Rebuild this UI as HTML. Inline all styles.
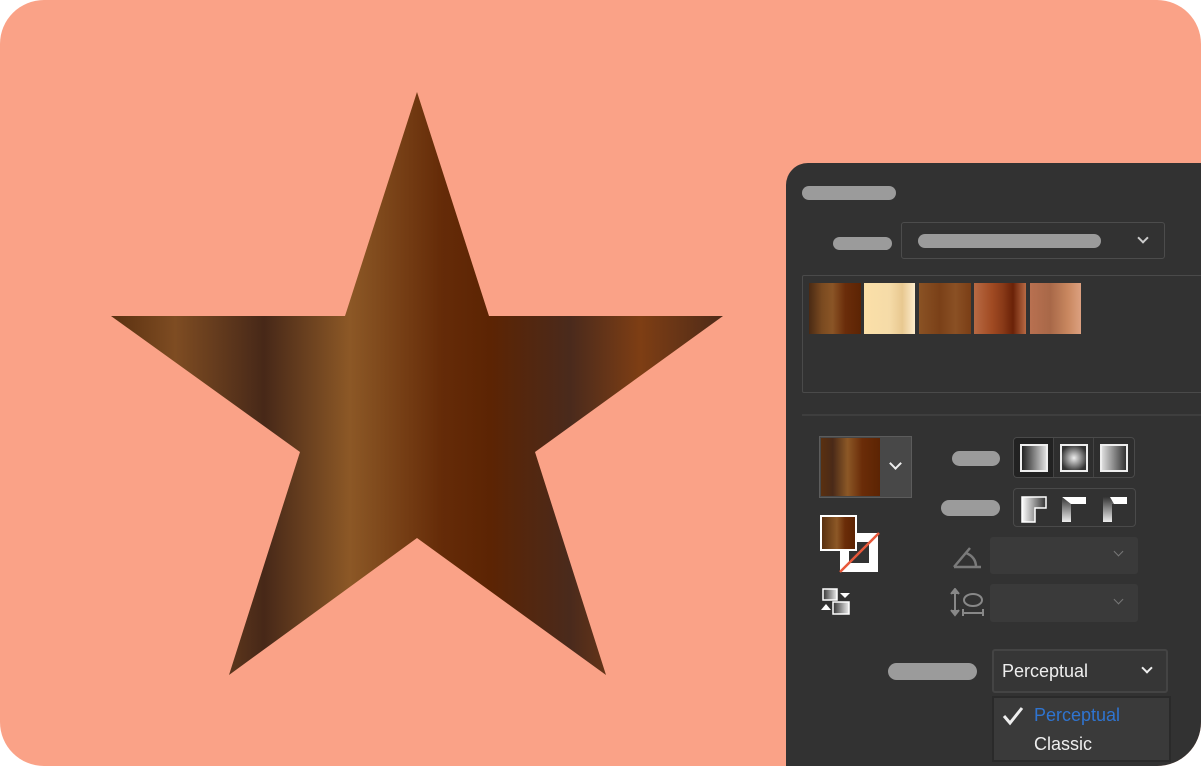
<!DOCTYPE html>
<html><head><style>
*{margin:0;padding:0;box-sizing:border-box}
html,body{width:1201px;height:766px;background:#fff;overflow:hidden}
#pg{position:absolute;left:0;top:0;width:1201px;height:766px;background:#FAA287;border-radius:44px;overflow:hidden}
.a{position:absolute}
.pill{position:absolute;background:#9b9b9b;border-radius:8px}
#panel{position:absolute;left:786px;top:163px;width:430px;height:620px;background:#323232;border-top-left-radius:22px}
.sw{position:absolute;top:283px;height:51px;width:52px}
.chev{position:absolute;width:8px;height:8px;border-right:2px solid #ccc;border-bottom:2px solid #ccc;transform:rotate(45deg)}
.btn{position:absolute;width:40px;height:40px;border-right:1px solid #444}
.gsq{position:absolute;left:6px;top:6px;width:28px;height:28px;border:2px solid #eee}
.dd{position:absolute;left:990px;width:148px;background:#3a3a3a;border-radius:3px}
</style></head><body>
<div id="pg">
<svg class="a" style="left:0;top:0" width="786" height="766">
<defs><linearGradient id="g" gradientUnits="userSpaceOnUse" x1="111" y1="0" x2="723" y2="0">
<stop offset="0" stop-color="#5a3010"/>
<stop offset="0.105" stop-color="#7e4c22"/>
<stop offset="0.25" stop-color="#472818"/>
<stop offset="0.39" stop-color="#8c5826"/>
<stop offset="0.54" stop-color="#652b08"/>
<stop offset="0.62" stop-color="#5c2403"/>
<stop offset="0.75" stop-color="#4a2a1c"/>
<stop offset="0.865" stop-color="#7e3e14"/>
<stop offset="1" stop-color="#4e2a18"/>
</linearGradient></defs>
<polygon points="417,92 489,316 723,316 535,452 606,675 417,538 229,675 300,452 111,316 345,316" fill="url(#g)"/>
</svg>
<div id="panel"></div>
<div class="pill" style="left:802px;top:186px;width:94px;height:14px"></div>
<div class="pill" style="left:833px;top:237px;width:59px;height:13px"></div>
<div class="a" style="left:901px;top:222px;width:264px;height:37px;border:1px solid #4c4c4c;border-radius:3px"></div>
<div class="pill" style="left:918px;top:234px;width:183px;height:14px"></div>
<div class="chev" style="left:1139px;top:234px"></div>
<div class="a" style="left:802px;top:275px;width:420px;height:118px;border:1px solid #4a4a4a;border-radius:2px"></div>
<div class="sw" style="left:809px;background:linear-gradient(90deg,#4a2a14,#7a4a20 25%,#8a5526 45%,#6a2c0a 70%,#5c2404)"></div>
<div class="sw" style="left:864px;width:51px;background:linear-gradient(90deg,#fbe0a8,#f5dba8 50%,#e8c890 75%,#fdeccc)"></div>
<div class="sw" style="left:919px;background:linear-gradient(90deg,#8a5224,#7a4018 40%,#8a5024 70%,#7a3e16)"></div>
<div class="sw" style="left:974px;background:linear-gradient(90deg,#b86a44,#a04a22 35%,#8a3a18 55%,#6a2208 75%,#b86a44)"></div>
<div class="sw" style="left:1030px;width:51px;background:linear-gradient(90deg,#b87050,#a86848 40%,#c98860 75%,#dca080)"></div>
<div class="a" style="left:802px;top:414px;width:400px;height:2px;background:#3e3e3e"></div>
<div class="a" style="left:819px;top:436px;width:93px;height:62px;background:#484848;border:1px solid #5c5c5c"></div>
<div class="a" style="left:821px;top:438px;width:59px;height:58px;background:linear-gradient(90deg,#5a3010,#4a2a18 20%,#8c5826 45%,#6a2c08 70%,#5c2403)"></div>
<div class="chev" style="left:891px;top:459px;border-color:#eee;width:9px;height:9px"></div>
<div class="a" style="left:820px;top:515px;width:37px;height:36px;border:2px solid #fff;background:linear-gradient(90deg,#5a3010,#8c5826 45%,#6a2c08 70%,#5c2403);z-index:2"></div>
<div class="a" style="left:840px;top:533px;width:38px;height:39px;background:#fff"></div>
<div class="a" style="left:849px;top:542px;width:20px;height:21px;background:#323232"></div>
<svg class="a" style="left:838px;top:531px;z-index:1" width="42" height="42"><line x1="2" y1="41" x2="41" y2="2" stroke="#e8583a" stroke-width="2.5"/></svg>
<svg class="a" style="left:820px;top:588px" width="34" height="28">
<defs><linearGradient id="s" x1="0" x2="1"><stop offset="0" stop-color="#333"/><stop offset="1" stop-color="#eee"/></linearGradient></defs>
<rect x="3" y="1" width="14" height="11" fill="url(#s)" stroke="#fff" stroke-width="1.5"/>
<polygon points="20,5 30,5 25,10" fill="#fff"/>
<polygon points="1,22 11,22 6,16" fill="#fff"/>
<rect x="13" y="14" width="16" height="12" fill="url(#s)" stroke="#fff" stroke-width="1.5"/></svg>
<div class="pill" style="left:952px;top:451px;width:48px;height:15px"></div>
<div class="pill" style="left:941px;top:500px;width:59px;height:16px"></div>
<div class="a" style="left:1013px;top:437px;width:122px;height:41px;border:1px solid #4a4a4a;border-radius:4px;background:#2e2e2e;overflow:hidden">
<div class="btn" style="left:0;top:0;background:#222"><div class="gsq" style="background:linear-gradient(90deg,#222,#ddd)"></div></div>
<div class="btn" style="left:40px;top:0"><div class="gsq" style="background:radial-gradient(circle,#eee,#333 80%)"></div></div>
<div class="btn" style="left:80px;top:0;border:none"><div class="gsq" style="background:linear-gradient(90deg,#ddd,#333)"></div></div>
</div>
<div class="a" style="left:1013px;top:488px;width:123px;height:39px;border:1px solid #4a4a4a;border-radius:4px;overflow:hidden">
<svg width="123" height="39">
<defs><linearGradient id="c" x1="0" x2="1"><stop offset="0" stop-color="#fff"/><stop offset="1" stop-color="#333"/></linearGradient>
<linearGradient id="c2" x1="0" x2="0" y1="0" y2="1"><stop offset="0" stop-color="#333"/><stop offset="1" stop-color="#eee"/></linearGradient></defs>
<path d="M8 33 V8 H32 V19 H21 V33 Z" fill="url(#c)" stroke="#fff" stroke-width="1.5"/>
<path d="M48 33 V8 H72 V15 H57 V33 Z" fill="url(#c2)"/><path d="M48 8 H72 V15 H56 Z" fill="#fff"/><path d="M48 8 L57 15 V33 H48Z" fill="url(#c2)"/>
<path d="M89 33 V8 H113 V15 H98 V33 Z" fill="url(#c2)"/><path d="M96 8 H113 V15 H100 Z" fill="#fff"/><path d="M89 8 L98 17 V33 H89Z" fill="url(#c2)"/>
</svg></div>
<svg class="a" style="left:952px;top:543px" width="32" height="28"><path d="M2 24 L18 5 M2 24 H29 M14 10 Q24 14 24 24" stroke="#7a7a7a" stroke-width="2.5" fill="none"/></svg>
<div class="dd" style="top:537px;height:37px"></div>
<div class="chev" style="left:1115px;top:548px;border-color:#777;width:7px;height:7px;border-width:1.5px"></div>
<svg class="a" style="left:950px;top:588px" width="36" height="30"><path d="M5 2 V26 M1 6 L5 1 L9 6 M1 22 L5 27 L9 22" stroke="#888" stroke-width="2" fill="#888"/><ellipse cx="23" cy="12" rx="9" ry="6" stroke="#888" stroke-width="2" fill="none"/><path d="M13 25 H33 M13 21 V28 M33 21 V28" stroke="#888" stroke-width="2"/></svg>
<div class="dd" style="top:584px;height:38px"></div>
<div class="chev" style="left:1115px;top:596px;border-color:#777;width:7px;height:7px;border-width:1.5px"></div>
<div class="pill" style="left:888px;top:663px;width:89px;height:17px;border-radius:9px"></div>
<div class="a" style="left:992px;top:649px;width:176px;height:44px;border:2px solid #444;border-radius:3px;background:#363636"></div>
<div class="a" style="left:1002px;top:661px;font:18px 'Liberation Sans',sans-serif;color:#eee">Perceptual</div>
<div class="chev" style="left:1143px;top:664px;border-color:#eee;width:8px;height:8px"></div>
<div class="a" style="left:992px;top:696px;width:179px;height:66px;border:2px solid #2a2a2a;background:#3a3a3a"></div>
<svg class="a" style="left:1002px;top:706px" width="22" height="20"><path d="M2 10 L8 17 L20 2" stroke="#eee" stroke-width="3" fill="none"/></svg>
<div class="a" style="left:1034px;top:705px;font:18px 'Liberation Sans',sans-serif;color:#2f74d0">Perceptual</div>
<div class="a" style="left:1034px;top:734px;font:18px 'Liberation Sans',sans-serif;color:#eee">Classic</div>
</div>
</body></html>
